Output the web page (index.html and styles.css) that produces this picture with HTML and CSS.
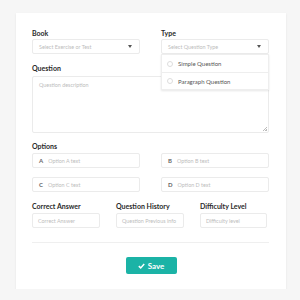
FILE: index.html
```html
<!DOCTYPE html>
<html>
<head>
<meta charset="utf-8">
<link rel="stylesheet" href="styles.css">
</head>
<body>
<div class="card">
  <div class="grid2">
    <div class="field">
      <div class="label">Book</div>
      <div class="box select"><span class="ph">Select Exercise or Test</span><span class="caret"></span></div>
    </div>
    <div class="field type">
      <div class="label">Type</div>
      <div class="box select"><span class="ph">Select Question Type</span><span class="caret"></span></div>
      <div class="menu">
        <div class="item"><span class="radio"></span>Simple Question</div>
        <div class="item"><span class="radio"></span>Paragraph Question</div>
      </div>
    </div>
  </div>
  <div class="label q">Question</div>
  <div class="box area"><span class="ph">Question description</span><span class="grip"></span></div>
  <div class="label opt">Options</div>
  <div class="grid2 opts">
    <div class="box"><span class="letter">A</span><span class="ph">Option A text</span></div>
    <div class="box"><span class="letter">B</span><span class="ph">Option B text</span></div>
    <div class="box"><span class="letter">C</span><span class="ph">Option C text</span></div>
    <div class="box"><span class="letter">D</span><span class="ph">Option D text</span></div>
  </div>
  <div class="grid3">
    <div class="field">
      <div class="label">Correct Answer</div>
      <div class="box"><span class="ph">Correct Answer</span></div>
    </div>
    <div class="field">
      <div class="label">Question History</div>
      <div class="box"><span class="ph">Question Previous info</span></div>
    </div>
    <div class="field">
      <div class="label">Difficulty Level</div>
      <div class="box"><span class="ph">Difficulty level</span></div>
    </div>
  </div>
  <div class="divider"></div>
  <div class="actions">
    <button class="save"><svg width="7" height="6" viewBox="0 0 7 6"><path d="M0.8 3.1 L2.7 4.9 L6.2 1" fill="none" stroke="#fff" stroke-width="1.5"/></svg>Save</button>
  </div>
</div>
</body>
</html>
```
FILE: styles.css
```css
* { box-sizing: border-box; }
body {
  margin: 0;
  background: #f6f6f6;
  font-family: Lato, "Open Sans", sans-serif;
  padding: 13px 0 0 16px;
}
.card {
  width: 270px;
  height: 276px;
  background: #fff;
  box-shadow: 0 1px 2px rgba(0,0,0,0.08);
  padding: 15px 17px 0 16px;
}
.grid2 {
  display: grid;
  grid-template-columns: 108px 108px;
  column-gap: 21px;
}
.field { position: relative; }
.label {
  font-size: 7px;
  font-weight: 700;
  color: #2a2a2a;
  line-height: 10px;
  margin-bottom: 1px;
  white-space: nowrap;
}
.box {
  height: 15px;
  border: 1px solid #ebebeb;
  border-radius: 2px;
  display: flex;
  align-items: center;
  padding: 0 6px;
  position: relative;
  background: #fff;
  white-space: nowrap;
  overflow: hidden;
}
.ph {
  font-size: 5.4px;
  color: #bdbdbd;
}
.select { justify-content: space-between; }
.caret {
  width: 0; height: 0;
  border-left: 2.5px solid transparent;
  border-right: 2.5px solid transparent;
  border-top: 3px solid #555;
  margin-right: 1px;
}
.menu {
  position: absolute;
  left: 0;
  top: 26px;
  width: 108px;
  background: #fff;
  border: 1px solid #eee;
  box-shadow: 0 1px 2px rgba(0,0,0,0.1);
  z-index: 2;
}
.item {
  height: 17px;
  display: flex;
  align-items: center;
  padding-left: 5px;
  font-size: 6px;
  color: #555;
}
.item + .item { border-top: 1px solid #eee; }
.radio {
  width: 6px; height: 6px;
  border: 1px solid #ddd;
  border-radius: 50%;
  margin-right: 5px;
}
.q { margin-top: 9px; margin-bottom: 3px; }
.area {
  height: 57px;
  align-items: flex-start;
  padding-top: 5px;
}
.grip {
  position: absolute;
  right: 1px; bottom: 1px;
  width: 4px; height: 4px;
  background: linear-gradient(135deg, transparent 45%, #bbb 45%, #bbb 60%, transparent 60%, transparent 75%, #bbb 75%);
}
.opt { margin-top: 8px; margin-bottom: 2px; }
.opts { row-gap: 9px; }
.letter {
  font-size: 6px;
  font-weight: 700;
  color: #666;
  margin-right: 5px;
}
.grid3 {
  display: grid;
  grid-template-columns: 68px 68px 67px;
  column-gap: 16px;
  margin-top: 9px;
}
.grid3 .label { margin-bottom: 2px; }
.grid3 .box { padding: 0 5px; }
.divider {
  height: 1px;
  background: #efefef;
  margin-top: 14px;
}
.actions {
  display: flex;
  justify-content: center;
  margin-top: 14px;
}
.save {
  width: 51px;
  height: 17px;
  background: #1bb3a6;
  border: none;
  border-radius: 2px;
  color: #fff;
  font-family: Lato, sans-serif;
  font-weight: 700;
  font-size: 8px;
  display: flex;
  align-items: center;
  justify-content: center;
  gap: 3px;
  padding: 0;
  margin-left: 1px;
}
```
